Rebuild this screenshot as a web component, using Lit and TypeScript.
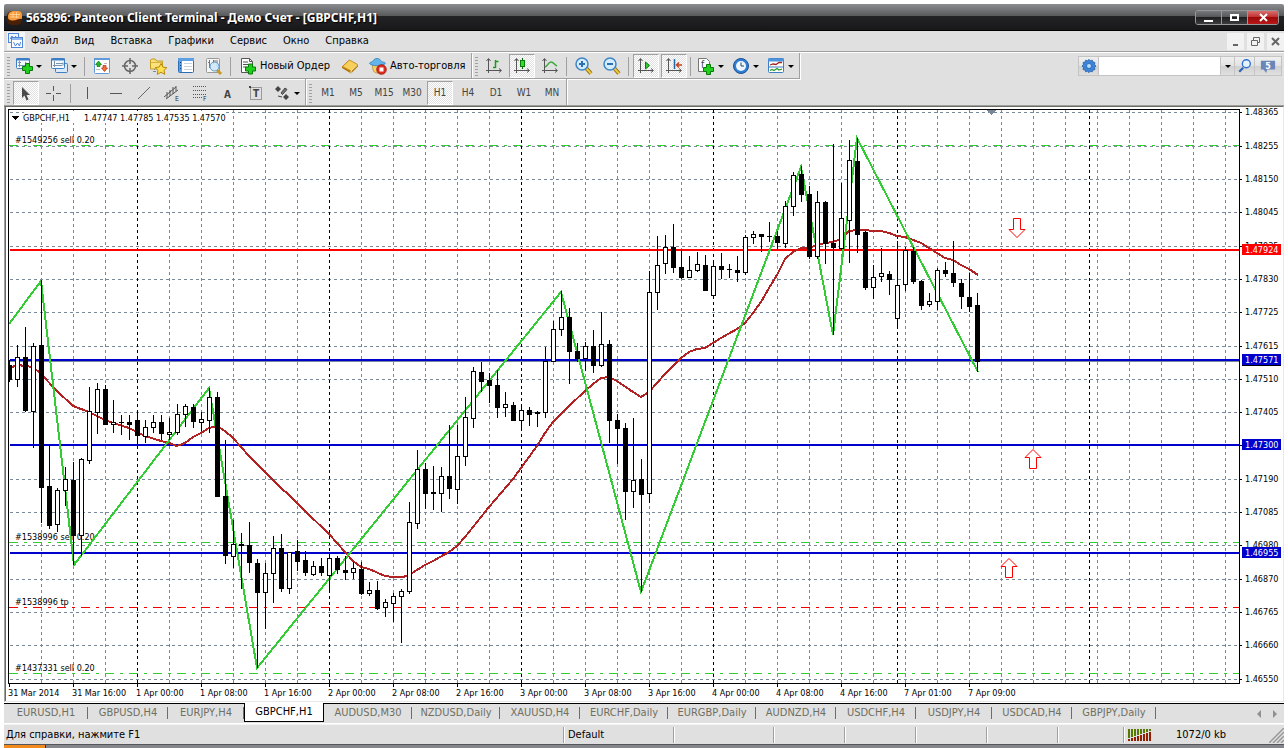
import { LitElement, html, svg, css, nothing } from "lit";
import { customElement, property } from "lit/decorators.js";
import { classMap } from "lit/directives/class-map.js";

type Point = [number, number];
// high, body top, body bottom, low, 1 = rising (hollow) / 0 = falling (filled)
type Candle = [number, number, number, number, 0 | 1];

const CANDLES: Candle[] = [
  [360, 365, 380, 382, 0], [345, 357, 380, 387, 1], [327, 357, 411, 412, 0], [343, 346, 412, 448, 1],
  [280, 345, 488, 523, 0], [445, 486, 526, 529, 0], [488, 490, 525, 532, 1], [467, 479, 491, 506, 1],
  [462, 480, 536, 565, 0], [458, 459, 536, 556, 1], [387, 411, 461, 464, 1], [383, 389, 413, 434, 1],
  [385, 389, 425, 425, 0], [400, 422, 425, 433, 1], [415, 422, 423, 435, 0], [415, 422, 425, 440, 0],
  [413, 420, 436, 444, 0], [420, 427, 437, 443, 1], [415, 422, 428, 433, 1], [415, 422, 434, 440, 0],
  [418, 432, 435, 440, 1], [404, 414, 433, 435, 1], [404, 406, 415, 427, 1], [404, 407, 422, 428, 0],
  [412, 419, 423, 431, 1], [388, 397, 421, 433, 1], [392, 397, 497, 497, 0], [440, 496, 556, 564, 0],
  [520, 544, 557, 568, 1], [533, 544, 546, 589, 0], [522, 545, 563, 573, 0], [559, 563, 593, 668, 0],
  [563, 573, 593, 629, 1], [536, 548, 574, 603, 1], [534, 548, 589, 592, 0], [552, 552, 589, 594, 1],
  [540, 551, 562, 571, 0], [551, 560, 573, 576, 0], [561, 566, 575, 576, 1], [558, 566, 573, 576, 0],
  [555, 558, 576, 592, 1], [556, 558, 570, 574, 0], [556, 570, 573, 580, 0], [562, 568, 573, 579, 1],
  [562, 569, 594, 595, 0], [582, 590, 594, 596, 1], [581, 590, 609, 610, 0], [599, 602, 608, 617, 1],
  [593, 596, 604, 622, 1], [589, 591, 597, 643, 1], [502, 522, 592, 594, 1], [450, 469, 524, 529, 1],
  [463, 469, 494, 509, 0], [466, 492, 494, 510, 0], [467, 476, 494, 512, 1], [425, 476, 489, 499, 0],
  [425, 456, 490, 504, 1], [397, 417, 457, 466, 1], [367, 371, 419, 428, 1], [362, 372, 382, 392, 0],
  [373, 380, 386, 403, 0], [370, 385, 408, 418, 0], [392, 404, 408, 417, 1], [402, 405, 421, 421, 0],
  [407, 410, 421, 430, 1], [407, 410, 415, 426, 0], [411, 412, 414, 427, 0], [347, 361, 413, 418, 1],
  [321, 329, 362, 362, 1], [291, 317, 330, 336, 1], [308, 317, 352, 384, 0], [343, 351, 359, 362, 0],
  [342, 346, 359, 371, 1], [330, 346, 366, 373, 0], [312, 344, 366, 367, 1], [340, 344, 421, 443, 0],
  [414, 420, 429, 464, 0], [423, 428, 492, 520, 0], [418, 480, 492, 508, 1], [459, 479, 495, 592, 0],
  [271, 292, 494, 503, 1], [236, 265, 293, 310, 1], [235, 247, 264, 274, 1], [224, 247, 268, 273, 0],
  [250, 267, 278, 279, 0], [256, 270, 278, 278, 1], [252, 264, 271, 272, 1], [255, 265, 291, 291, 0],
  [262, 266, 296, 296, 1], [253, 266, 270, 279, 0], [264, 269, 270, 278, 0], [256, 270, 273, 282, 0],
  [235, 237, 273, 275, 1], [231, 234, 238, 244, 1], [234, 234, 237, 252, 0], [222, 236, 237, 242, 0],
  [231, 236, 243, 249, 0], [201, 206, 244, 248, 1], [172, 175, 207, 216, 1], [166, 174, 195, 202, 0],
  [186, 194, 257, 259, 0], [191, 202, 257, 259, 1], [201, 202, 244, 264, 0], [144, 243, 248, 335, 0],
  [183, 218, 249, 250, 1], [140, 160, 221, 263, 1], [138, 161, 235, 253, 0], [231, 232, 288, 290, 0],
  [265, 277, 288, 299, 1], [248, 273, 277, 282, 1], [271, 274, 280, 295, 0], [241, 285, 319, 327, 1],
  [247, 250, 285, 291, 1], [247, 251, 282, 284, 0], [280, 281, 306, 310, 0], [293, 301, 305, 307, 1],
  [268, 270, 302, 310, 1], [262, 270, 274, 277, 0], [241, 273, 283, 287, 0], [279, 283, 297, 309, 0],
  [273, 297, 307, 312, 0], [293, 305, 362, 372, 0],
];

const AVERAGE: Point[] = [
  [9, 368], [18, 365], [25, 366], [33, 367], [41, 374], [57, 391], [73, 406], [89, 412], [105, 420], [113, 423],
  [129, 428], [145, 436], [161, 441], [169, 443], [177, 446], [185, 443], [193, 437], [201, 433], [209, 428],
  [217, 426], [225, 431], [233, 438], [249, 456], [273, 480], [281, 488], [289, 495], [305, 511], [329, 534],
  [345, 552], [353, 561], [361, 567], [369, 569], [385, 576], [393, 577], [403, 577], [409, 575], [425, 565],
  [433, 561], [449, 552], [457, 546], [465, 537], [473, 527], [489, 507], [513, 479], [537, 446], [545, 433],
  [553, 422], [569, 406], [585, 391], [593, 384], [601, 378], [609, 377], [617, 381], [633, 392], [641, 397],
  [649, 392], [665, 374], [681, 358], [689, 352], [697, 349], [705, 348], [721, 338], [737, 329], [745, 323],
  [753, 313], [761, 302], [769, 288], [777, 275], [785, 259], [793, 252], [801, 248], [809, 248], [817, 245],
  [825, 243], [833, 242], [841, 239], [849, 231], [857, 230], [881, 231], [889, 233], [897, 236], [905, 237],
  [913, 240], [921, 243], [937, 253], [945, 258], [953, 260], [961, 265], [969, 269], [978, 275],
];

const ZIGZAG: Point[] = [
  [9, 324], [41, 281], [74, 565], [209, 388], [257, 668], [561, 292], [641, 592], [801, 167], [833, 335],
  [857, 138], [978, 372],
];

const PRICES: [number, string][] = [
  [112, "1.48365"], [146, "1.48255"], [179, "1.48150"], [212, "1.48045"], [246, "1.47935"], [279, "1.47830"],
  [312, "1.47725"], [346, "1.47615"], [379, "1.47510"], [412, "1.47405"], [445, ""], [479, "1.47190"],
  [512, "1.47085"], [545, "1.46980"], [579, "1.46870"], [612, "1.46765"], [645, "1.46660"], [679, "1.46550"],
];

const LEVELS = [
  { y: 249, price: "1.47924", color: "#ff0000" },
  { y: 359, price: "1.47571", color: "#0000cd" },
  { y: 444, price: "1.47300", color: "#0000cd" },
  { y: 552, price: "1.46955", color: "#0000cd" },
];

const ORDERS = [
  { y: 145, color: "#32cd32", label: "#1549256 sell 0.20" },
  { y: 542, color: "#32cd32", label: "#1538996 sell 0.20" },
  { y: 607, color: "#ee0000", label: "#1538996 tp" },
  { y: 673, color: "#32cd32", label: "#1437331 sell 0.20" },
];

const DAY_STARTS = [137, 329, 521, 713, 897, 1089];

const TIMES = [
  "31 Mar 2014", "31 Mar 16:00", "1 Apr 00:00", "1 Apr 08:00", "1 Apr 16:00", "2 Apr 00:00", "2 Apr 08:00",
  "2 Apr 16:00", "3 Apr 00:00", "3 Apr 08:00", "3 Apr 16:00", "4 Apr 00:00", "4 Apr 08:00", "4 Apr 16:00",
  "7 Apr 01:00", "7 Apr 09:00",
];

const ORIGIN = "translate(-9 -110)";
const toPoints = (list: Point[]) => list.map((p) => p.join(",")).join(" ");

@customElement("price-chart")
class PriceChart extends LitElement {
  static styles = css`
    :host {
      display: flex;
      flex-direction: column;
      font: 9px/12px "DejaVu Sans Condensed", "DejaVu Sans", sans-serif;
      color: #000;
    }
    .main {
      flex: 1;
      display: flex;
      min-height: 0;
    }
    .plot {
      flex: 1;
      min-width: 0;
      border: 1px solid #000;
      overflow: hidden;
    }
    .axis {
      flex: 0 0 42px;
    }
    svg {
      display: block;
      width: 100%;
      height: 100%;
      shape-rendering: crispEdges;
    }
    .axis svg {
      overflow: visible;
    }
    .curve {
      fill: none;
      stroke-width: 2;
    }
    .arrow {
      fill: #fff;
      stroke: #f00;
      shape-rendering: geometricPrecision;
    }
    .times {
      display: flex;
      height: 17px;
      overflow: hidden;
    }
    .time {
      flex: 0 0 64px;
      white-space: nowrap;
      padding-top: 3px;
      position: relative;
    }
    .time::before {
      content: "";
      position: absolute;
      left: 1px;
      top: 0;
      width: 1px;
      height: 3px;
      background: #000;
    }
  `;

  private grid() {
    const columns = Array.from({ length: 38 }, (_, i) => 41 + 32 * i).filter((x) => !DAY_STARTS.includes(x));
    return svg`
      ${PRICES.map(([y]) => svg`<line x1="10" x2="4000" y1=${y + 0.5} y2=${y + 0.5} stroke="#778899" stroke-dasharray="3 3"/>`)}
      ${columns.map((x) => svg`<line x1=${x + 0.5} x2=${x + 0.5} y1="110" y2="1600" stroke="#778899" stroke-dasharray="3 3"/>`)}
      ${DAY_STARTS.map((x) => svg`<line x1=${x + 0.5} x2=${x + 0.5} y1="110" y2="1600" stroke="#000" stroke-dasharray="3 3"/>`)}
    `;
  }

  private candle([high, top, bottom, low, up]: Candle, i: number) {
    const x = 9 + 8 * i;
    return svg`
      <rect x=${x} y=${high} width="1" height=${low - high}/>
      <rect x=${x - 2} y=${top} width="5" height=${bottom - top}/>
      ${up ? svg`<rect x=${x - 1} y=${top + 1} width="3" height=${bottom - top - 2} fill="#fff"/>` : nothing}
    `;
  }

  private arrow(x: number, y: number, down: boolean) {
    const d = down
      ? "M-3.500 -9.500h7v11h4.500l-8 8l-8 -8h4.500z"
      : "M-3.500 9.500h7v-11h4.500l-8 -8l-8 8h4.500z";
    return svg`<path class="arrow" transform="translate(${x} ${y})" d=${d}/>`;
  }

  render() {
    return html`
      <div class="main">
        <div class="plot">
          <svg role="img" aria-label="GBPCHF,H1">
            <g transform=${ORIGIN}>
              ${this.grid()}
              ${ORDERS.map(
                (o) => svg`
                <line x1="9" x2="4000" y1=${o.y + 0.5} y2=${o.y + 0.5} stroke=${o.color} stroke-dasharray="9 6 3 6"/>
                <text x="15" y=${o.y - 2}>${o.label}</text>`,
              )}
              <rect x="10" y="361" width="4000" height="1" fill="#778899"/>
              ${LEVELS.map((l) => svg`<rect x="10" y=${l.y} width="4000" height="2" fill=${l.color}/>`)}
              <polyline class="curve" stroke="#b22222" points=${toPoints(AVERAGE)} />
              <polyline class="curve" stroke="#32cd32" points=${toPoints(ZIGZAG)} />
              ${CANDLES.map((c, i) => this.candle(c, i))}
              ${this.arrow(1017, 228, true)} ${this.arrow(1033, 459, false)} ${this.arrow(1009, 568, false)}
              <rect x="24" y="111" width="202" height="12" fill="#fff" />
              <path d="M12 116h7l-3.500 4z" />
              <text x="23" y="121">GBPCHF,H1</text>
              <text x="84" y="121">1.47747 1.47785 1.47535 1.47570</text>
              <path d="M987 110h9l-4.500 5z" fill="#778899" />
            </g>
          </svg>
        </div>
        <div class="axis">
          <svg role="img" aria-label="Price">
            <g transform="translate(-1240 -109)">
              ${PRICES.map(
                ([y, label]) => svg`
                <rect x="1240" y=${y} width="2" height="1"/>
                <text x="1245" y=${y + 3}>${label}</text>`,
              )}
              <rect x="1242" y="360" width="39" height="6" />
              ${LEVELS.map(
                (l) => svg`
                <rect x="1242" y=${l.y - 5} width="39" height="11" fill=${l.color}/>
                <text x="1245" y=${l.y + 4} fill="#fff">${l.price}</text>`,
              )}
            </g>
          </svg>
        </div>
      </div>
      <div class="times">${TIMES.map((t) => html`<span class="time">${t}</span>`)}</div>
    `;
  }
}

const axes = svg`<path d="M3.500 2v14M1 13.500h15M1.500 4l2-2.500l2 2.500M14 11.500l2.500 2l-2.500 2" fill="none" stroke="#555"/>`;
const plus = (x: number, y: number) =>
  svg`<path transform="translate(${x} ${y})" d="M3.500 .5h4v3h3v4h-3v3h-4v-3h-3v-4h3z" fill="#1fd01f" stroke="#0a7a0a"/>`;
const lens = svg`
  <path d="M11 11l5 5.500" stroke="#8a6a10" stroke-width="4"/><path d="M11 11l5 5.500" stroke="#f0c840" stroke-width="2"/>
  <circle cx="7" cy="7" r="6" fill="#d4ecfb" stroke="#3f86c6" stroke-width="1.500"/>`;

const ICONS: Record<string, unknown> = {
  newChart: svg`<rect x="1.500" y="1.500" width="13" height="10" rx="1" fill="#f4f9ff" stroke="#3c7fc4"/><path d="M1 2.500h14" stroke="#3c7fc4" stroke-width="2"/>
    <path d="M4.500 4v6M3 5.500h3M3 8.500h9M10.500 5v4" stroke="#7d93aa" fill="none"/>${plus(7, 6)}`,
  profiles: svg`<rect x="5.500" y="6.500" width="12" height="9" rx="1" fill="#d8e9fa" stroke="#3c7fc4"/>
    <rect x="1.500" y="1.500" width="13" height="10" rx="1" fill="#f4f9ff" stroke="#3c7fc4"/><path d="M1 2.500h14" stroke="#3c7fc4" stroke-width="2"/>
    <path d="M4.500 4v6M3 8.500h9M6 6.500h7M13 5.500v3" stroke="#7d93aa" fill="none"/>`,
  market: svg`<rect x="1.500" y="1.500" width="15" height="15" rx="1" fill="#fff" stroke="#5d9bdc"/><path d="M1 2h16" stroke="#5d9bdc" stroke-width="2"/>
    <path d="M4 9.500v-2h-1.500l3-3.500l3 3.500h-1.500v2z" fill="#28b428" stroke="#0a7a0a" stroke-width=".7"/><path d="M10 8.500v2.500h-1.500l3 3.500l3-3.500h-1.500v-2.500z" fill="#f0703c" stroke="#b03010" stroke-width=".7"/>
    <path d="M11 6.500h3M3 12.500h4" stroke="#bbb"/>`,
  cross: svg`<circle cx="9" cy="9" r="5.500" fill="none" stroke="#666" stroke-width="1.500"/><path d="M9 1v6M9 11v6M1 9h6M11 9h6" stroke="#666" stroke-width="1.500"/>`,
  folder: svg`<path d="M1.500 3v9h12v-8h-6l-1.500-2h-3.500z" fill="#fbe27c" stroke="#c39a20"/><path d="M1.500 5.500h12" stroke="#d7b23c"/><path d="M4 14.500h4M5.500 12v4" stroke="#888" stroke-dasharray="1 1"/>
    <path d="M12 6.500l1.900 3.600l4 .5l-2.900 2.700l.8 4l-3.800-2l-3.800 2l.8-4l-2.900-2.700l4-.5z" fill="#ffe14d" stroke="#b88710"/>`,
  panel: svg`<rect x="1.500" y="1.500" width="15" height="14" rx="1" fill="#fff" stroke="#2d6db5"/><path d="M1 2.500h16M3.500 2v13" stroke="#5b9fe4" stroke-width="3"/>
    <path d="M7 6.500h8M7 9.500h8M7 12.500h8" stroke="#c7d2e0"/><path d="M3 5.500h1M3 8.500h1M3 11.500h1" stroke="#103c80"/>`,
  tester: svg`<rect x="1.500" y="1.500" width="13" height="14" rx="1" fill="#f6f6f6" stroke="#999"/><path d="M4.500 3v8M8.500 3v4M12 3v7M3 5.500h2M8 4h3" stroke="#777"/>
    <path d="M12 13l4 4" stroke="#c79a28" stroke-width="3"/><circle cx="9.500" cy="9.500" r="4.500" fill="#cde7fa" stroke="#5f94c4" fill-opacity=".85"/>`,
  order: svg`<path d="M2.500 1.500h8l3 3v11h-11z" fill="#fff" stroke="#555"/><path d="M10.500 1.500v3h3M4 5h5M4 7.500h7M4 10h4" fill="none" stroke="#555"/>${plus(6, 6.5)}`,
  gold: svg`<path d="M1 11l9 5.500l7-7v-2l-9-4.500l-7 6.500z" fill="#b5780c"/><path d="M1.500 9.500l7-6.500l8 4.500l-6.500 6.500z" fill="#f8cf5a" stroke="#c0861a" stroke-width=".8"/><path d="M10 16v-2l6.500-6" stroke="#ffe9a0" fill="none"/>`,
  auto: svg`<path d="M3.500 7h10c0 4 0 9-5 9s-5-5-5-9z" fill="#f6cf6a" stroke="#b88a2a" stroke-width=".8"/><path d="M3 8c-3-1-3-2-1-3c2 .5 2-3.500 6-3.500s4 4 6 3.500c3 .5 3 2 0 3c-3 1-8 1-11 0z" fill="#62b4ea" stroke="#2e7fb8" stroke-width=".8"/>
    <circle cx="12.500" cy="12.500" r="4.800" fill="#dc2d1e" stroke="#96140a" stroke-width=".8"/><rect x="10.500" y="10.500" width="4" height="4" fill="#fff"/>`,
  bars: svg`${axes}<path d="M10.500 3v8M10.500 4.500h3M8 10.500h2.500" stroke="#1a9a1a" stroke-width="1.500" fill="none"/>`,
  candles: svg`${axes}<path d="M9.500 1v11" stroke="#0a6a0a"/><rect x="7.500" y="3.500" width="4" height="6" fill="#2fe02f" stroke="#0a7a0a"/>`,
  line: svg`${axes}<path d="M4 10c3-1 3-5 6-5s3 3 6 4" stroke="#3cab3c" stroke-width="1.500" fill="none"/>`,
  zoomIn: svg`${lens}<path d="M7 4v6M4 7h6" stroke="#2c70b4" stroke-width="2"/>`,
  zoomOut: svg`${lens}<path d="M4 7h6" stroke="#2c70b4" stroke-width="2"/>`,
  scroll: svg`${axes}<path d="M8.500 5v7l4-3.500z" fill="#2fd02f" stroke="#0a7a0a"/>`,
  shift: svg`${axes}<path d="M9.500 2v10" stroke="#1f66a8" stroke-width="1.500"/><path d="M17 8h-5M14 5.500l-2.500 2.500l2.500 2.500" stroke="#c8401a" fill="none" stroke-width="1.500"/>`,
  indicators: svg`<path d="M1.500 1.500h8l3 3v10h-11z" fill="#fff" stroke="#777"/><text x="4" y="11" class="glyph">f</text>${plus(6, 7)}`,
  clock: svg`<circle cx="9" cy="9" r="7.500" fill="#2f7fd6" stroke="#1b4f94"/><circle cx="9" cy="9" r="5" fill="#eef6ff"/><path d="M9 5.500v3.500h3" stroke="#345" fill="none"/>`,
  template: svg`<rect x="1.500" y="1.500" width="15" height="14" rx="1" fill="#fff" stroke="#3c7fc4"/><path d="M1 3h16" stroke="#4c94dd" stroke-width="3"/><path d="M1 10h16" stroke="#3c7fc4"/>
    <path d="M3 8l3-1l3 .5l3-2h3" stroke="#a02818" fill="none" stroke-width="1.300"/><path d="M3 13.500l2-1l2 1l3-2l2 1.500l3-1" stroke="#2a9a2a" fill="none" stroke-width="1.300"/>`,
  pointer: svg`<path d="M5 3v11l2.500-2.500l2 5l2-1l-2-4.500h3.500z" fill="#4a4a4a"/>`,
  crosshair: svg`<path d="M8.500 2v5M8.500 11v6M1 9.500h5M11 9.500h5" stroke="#555" shape-rendering="crispEdges"/>`,
  vline: svg`<path d="M8.500 3v12" stroke="#555"/>`,
  hline: svg`<path d="M3 9.500h12" stroke="#555"/>`,
  trend: svg`<path d="M3 15l12-12" stroke="#666"/>`,
  channel: svg`<path d="M1 13l12-10M3 15l12-9M4 8v6M7 6v6M10 3v7M13 2v5" stroke="#555" fill="none"/><text x="12" y="17" class="tiny">E</text>`,
  fibo: svg`<path d="M2 2.500h14M2 6.500h14M2 10.500h14M2 13.500h9" stroke="#555" stroke-dasharray="1 1"/><text x="12" y="17" class="tiny">F</text>`,
  text: svg`<text x="5" y="14" class="glyph bold">A</text>`,
  label: svg`<rect x="3.500" y="3.500" width="11" height="12" fill="none" stroke="#555" stroke-dasharray="1 1"/><rect x="2" y="2" width="2" height="2" fill="#444"/><text x="6" y="13" class="glyph bold">T</text>`,
  shapes: svg`<path d="M5 2l3 3l-3 3l-3-3zM4 8.500l3 1.500M13 10l3 3l-3 3l-3-3z" fill="#444"/><path d="M5 12l4 1M12 4l-4 5l1.500 1.500l4.500-5z" fill="#777" stroke="#444"/>`,
  gear: svg`<g fill="#3d84d8" stroke="#1b5aa8" stroke-width=".8"><path d="M9 1.500l1.500 1.500l2.200-.6l.8 2.100l2.200 .6l-.4 2.200l1.600 1.700l-1.600 1.700l.4 2.200l-2.200 .6l-.8 2.100l-2.200-.6l-1.500 1.500l-1.500-1.500l-2.200 .6l-.8-2.100l-2.200-.6l.4-2.200l-1.600-1.700l1.600-1.700l-.4-2.200l2.200-.6l.8-2.100l2.200 .6z"/><circle cx="9" cy="9" r="2.800" fill="#b9dcfb"/></g>`,
  search: svg`<path d="M7 11l-4.500 4.500" stroke="#2f62b4" stroke-width="2.500"/><circle cx="10.500" cy="6.500" r="4.500" fill="#e6f2ff" stroke="#2f6fd0" stroke-width="1.500"/>`,
  chat: svg`<path d="M1 3h16v10h-9l-1 4l-3-4h-3z" fill="#6b86b8"/><text x="6" y="12" class="glyph bold light">5</text>`,
  app: svg`<rect x="1" y="2" width="15" height="14" rx="5" fill="#4a1f08"/><path d="M2 8c0-4 2-6 6-6h4c3 0 4 2 4 4v4c-3-1-7 3-12 1c-1.500-.5-2-1.500-2-3z" fill="#f79a3c"/><path d="M4 5.500h10M4 8h9M7 3v6M10.500 3v6" stroke="#ffd9a0" stroke-width=".8"/>`,
  doc: svg`<path d="M0 0h18v18h-18z" fill="#f4f4f4"/><rect x="1.500" y="1.500" width="10" height="9" fill="#eef5ff" stroke="#4f86d8"/><path d="M3 7l2-3l2 3l2-3" fill="none" stroke="#4f86d8"/><rect x="4.500" y="5.500" width="11" height="10" fill="#fff" stroke="#4f86d8"/><path d="M5 7h10" stroke="#8fb6ee" stroke-width="2"/><path d="M6.500 10l2 4l2-3l2 3l1-4" fill="none" stroke="#4f86d8"/>`,
};

const icon = (name: string) => html`<svg class="icon" viewBox="0 0 18 18" aria-hidden="true">${ICONS[name]}</svg>`;

const MENU = ["Файл", "Вид", "Вставка", "Графики", "Сервис", "Окно", "Справка"];
const PERIODS = ["M1", "M5", "M15", "M30", "H1", "H4", "D1", "W1", "MN"];
const TABS: [string, string][] = [
  ["EURUSD,H1", "w84"], ["GBPUSD,H4", "w80"], ["EURJPY,H4", "w76"], ["GBPCHF,H1", "w80"], ["AUDUSD,M30", "w88"],
  ["NZDUSD,Daily", "w88"], ["XAUUSD,H4", "w80"], ["EURCHF,Daily", "w88"], ["EURGBP,Daily", "w88"],
  ["AUDNZD,H4", "w80"], ["USDCHF,H4", "w80"], ["USDJPY,H4", "w76"], ["USDCAD,H4", "w80"], ["GBPJPY,Daily", "w84"],
];

@customElement("app-root")
class AppRoot extends LitElement {
  @property() period = "H1";
  @property() symbol = "GBPCHF,H1";

  static styles = css`
    :host {
      display: flex;
      flex-direction: column;
      box-sizing: border-box;
      min-height: 100vh;
      padding: 4px 4px 0;
      background: #fff;
      color: #000;
      font: 11px/14px "DejaVu Sans Condensed", "DejaVu Sans", sans-serif;
      overflow: hidden;
    }
    button {
      font: inherit;
      color: inherit;
      border: 0;
      padding: 0;
      margin: 0;
      background: none;
      white-space: nowrap;
    }
    .icon {
      display: block;
      flex: none;
      width: 18px;
      height: 18px;
      overflow: visible;
    }
    .glyph {
      font: 10px "DejaVu Sans Condensed", sans-serif;
      fill: #444;
    }
    .tiny {
      font: 7px "DejaVu Sans Condensed", sans-serif;
      fill: #333;
    }
    .bold {
      font-weight: bold;
    }
    .light {
      fill: #fff;
    }

    .title {
      display: flex;
      align-items: center;
      height: 27px;
      box-sizing: border-box;
      padding: 0 5px 0 2px;
      gap: 2px;
      background: linear-gradient(#8c8d90 0, #58595b 12px, #232325 12px, #18181a 26px, #000 26px);
      border-radius: 2px 2px 0 0;
    }
    .caption {
      flex: 1;
      margin: 0;
      font: bold 12px/16px "Noto Sans", "Open Sans", sans-serif;
      color: #fff;
      text-shadow: 1px 1px 1px #000;
      white-space: nowrap;
    }
    .window {
      display: flex;
      border: 1px solid #999;
      border-radius: 3px;
      overflow: hidden;
    }
    .window button {
      width: 26px;
      height: 13px;
      border-right: 1px solid #999;
      background: linear-gradient(#77787a 0, #55565a 6px, #1c1c1e 6px, #3c3c3e);
    }
    .window button:last-child {
      width: 30px;
      border-right: 0;
      background: linear-gradient(#d87070 0, #c03030 6px, #9c0808 6px, #b81818);
    }
    .window svg,
    .child svg {
      display: block;
      margin: auto;
    }

    .menu {
      display: flex;
      align-items: center;
      height: 21px;
      box-sizing: border-box;
      padding: 0 0 0 3px;
      background: #e0e0e0;
      border-bottom: 1px solid #a0a0a0;
    }
    .items {
      flex: 1;
      display: flex;
      gap: 16px;
      padding-left: 6px;
    }
    .child {
      display: flex;
      gap: 3px;
    }
    .child button {
      width: 17px;
      height: 17px;
      background: #f2f2f2;
    }

    .bars {
      background: #e0e0e0;
      border-top: 1px solid #fff;
      border-bottom: 1px solid #a0a0a0;
    }
    .row {
      display: flex;
      align-items: stretch;
      height: 26px;
    }
    .band {
      display: flex;
      align-items: center;
      box-sizing: border-box;
      padding-top: 1px;
      border-right: 1px solid #a0a0a0;
      border-bottom: 1px solid #a0a0a0;
      box-shadow: 1px 1px #fff;
    }
    .row:last-child .band {
      border-bottom: 0;
      padding-top: 2px;
      box-shadow: 1px 0 #fff;
    }
    .grip {
      width: 3px;
      height: 19px;
      margin: 0 2px 0 3px;
      background: repeating-linear-gradient(#a0a0a0 0 1px, transparent 1px 3px);
    }
    .tool {
      display: flex;
      align-items: center;
      justify-content: center;
      box-sizing: border-box;
      width: 26px;
      height: 24px;
      margin: 0 1px;
    }
    .drop {
      width: 33px;
      gap: 3px;
      justify-content: flex-start;
      padding-left: 2px;
    }
    .drop::after {
      content: "";
      border: 3px solid transparent;
      border-top-color: #000;
      border-bottom: 0;
    }
    .wide {
      width: auto;
      gap: 3px;
      padding: 0 5px 0 4px;
    }
    .on {
      border: 1px solid #a0a0a0;
      border-right-color: #fff;
      border-bottom-color: #fff;
      background: repeating-conic-gradient(#fff 0 25%, #e0e0e0 0 50%) 0 0 / 2px 2px;
    }
    .period {
      color: #444;
      font-size: 10px;
    }
    .sep {
      width: 1px;
      height: 19px;
      margin: 0 3px 0 2px;
      background: #a0a0a0;
    }
    .spacer {
      flex: 1;
    }
    .finder {
      display: flex;
      align-self: center;
      height: 20px;
      margin: 0 2px 0 0;
      border: 1px solid #c4c4c4;
      box-sizing: border-box;
      background: #c4c4c4;
      gap: 1px;
    }
    .finder button {
      display: flex;
      align-items: center;
      justify-content: center;
      width: 19px;
      background: linear-gradient(#f0f0f0, #e2e2e2 9px, #d0d0d0 9px, #e0e0e0);
    }
    .finder .icon {
      width: 16px;
      height: 16px;
    }
    .finder .more {
      width: 13px;
    }
    .finder .more::after {
      content: "";
      border: 3px solid transparent;
      border-top-color: #000;
      border-bottom: 0;
    }
    .finder .chat {
      width: 26px;
    }
    .finder input {
      width: 121px;
      box-sizing: border-box;
      padding: 0 3px;
      border: 0;
      outline: 0;
      font: inherit;
      background: #fff;
    }

    .chart {
      flex: 1;
      display: flex;
      flex-direction: column;
      min-height: 0;
      padding: 2px 1px 0 2px;
      border-top: 1px solid #6b6b5f;
      border-left: 1px solid #a0a0a0;
      border-right: 1px solid #e8e8e8;
      border-bottom: 1px solid #e8e8e8;
      box-shadow: inset 1px 0 #6b6b5f;
    }
    price-chart {
      flex: 1;
      min-height: 0;
      padding-left: 1px;
    }

    .tabs {
      display: flex;
      height: 20px;
      margin-top: 1px;
      background: #e0e0e0;
      color: #6f6f60;
      border-bottom: 1px solid #fff;
      overflow: hidden;
    }
    .tabs > * {
      border-top: 1px solid #000;
    }
    .tab {
      box-sizing: border-box;
      flex: none;
      padding-bottom: 1px;
      height: 19px;
      background: linear-gradient(#6f6f60, #6f6f60) 100% 3px / 1px 12px no-repeat;
    }
    .w76 {
      width: 76px;
    }
    .w80 {
      width: 80px;
    }
    .w84 {
      width: 84px;
    }
    .w88 {
      width: 88px;
    }
    .current {
      color: #000;
      background: #fff;
      border: 1px solid #000;
      border-top: 0;
    }
    .rest {
      flex: 1;
      display: flex;
      justify-content: flex-end;
      align-items: center;
      gap: 12px;
      padding-right: 7px;
    }
    .rest button {
      border: 4px solid transparent;
    }
    .rest .left {
      border-right-color: #909090;
      border-left: 0;
    }
    .rest .right {
      border-left-color: #909090;
      border-right: 0;
    }

    .status {
      display: flex;
      align-items: center;
      box-sizing: border-box;
      height: 20px;
      padding-top: 1px;
      background: #e0e0e0;
      border-top: 1px solid #f4f4f4;
    }
    .cell {
      flex: none;
      box-sizing: border-box;
      display: flex;
      align-items: center;
      height: 16px;
      padding-left: 4px;
      border-left: 1px solid #a0a0a0;
      box-shadow: inset 1px 0 #fff;
    }
    .hint {
      flex: 1;
      padding-left: 2px;
    }
    .preset {
      width: 110px;
    }
    .c100 {
      width: 100px;
    }
    .c71 {
      width: 71px;
    }
    .c66 {
      width: 66px;
    }
    .traffic {
      width: 161px;
      gap: 24px;
      padding-right: 0;
    }
    .size-grip {
      align-self: flex-end;
      margin-left: auto;
    }
    .frame {
      height: 4px;
      background: linear-gradient(90deg, #f28a1e 41px, #333 41px 42px, #85868c 42px);
      border-top: 1px solid #55565a;
      box-sizing: border-box;
    }
  `;

  private tool(name: string, label: string, kind = "") {
    const classes = { tool: true, on: kind === "on", drop: kind === "drop" };
    return html`<button class=${classMap(classes)} aria-label=${label}>${icon(name)}</button>`;
  }

  private renderTitle() {
    return html`
      <header class="title">
        ${icon("app")}
        <h1 class="caption">565896: Panteon Client Terminal - Демо Счет - [GBPCHF,H1]</h1>
        <div class="window">
          <button aria-label="Minimize"><svg width="10" height="9"><path d="M0 7h9v2h-9z" fill="#fff" /></svg></button>
          <button aria-label="Maximize"><svg width="10" height="9"><path d="M1 2h7v5h-7z" fill="none" stroke="#fff" stroke-width="2" /></svg></button>
          <button aria-label="Close"><svg width="9" height="9"><path d="M1 1l7 7M8 1l-7 7" stroke="#fff" stroke-width="2" /></svg></button>
        </div>
      </header>
    `;
  }

  private renderMenu() {
    return html`
      <nav class="menu">
        ${icon("doc")}
        <div class="items">${MENU.map((m) => html`<button>${m}</button>`)}</div>
        <div class="child">
          <button aria-label="Minimize chart"><svg width="9" height="9"><path d="M2 7h5v2h-5z" fill="#666" /></svg></button>
          <button aria-label="Restore chart"><svg width="9" height="9"><path d="M2.500 3v-2.500h6v5h-2M.5 3.500h6v5h-6z" fill="none" stroke="#666" /></svg></button>
          <button aria-label="Close chart"><svg width="9" height="9"><path d="M1 1l7 7M8 1l-7 7" stroke="#666" stroke-width="2" /></svg></button>
        </div>
      </nav>
    `;
  }

  private renderBars() {
    return html`
      <div class="bars">
        <div class="row">
          <div class="band">
            <i class="grip"></i>
            ${this.tool("newChart", "New chart", "drop")} ${this.tool("profiles", "Profiles", "drop")}
            <i class="sep"></i>
            ${this.tool("market", "Market watch")} ${this.tool("cross", "Data window")}
            ${this.tool("folder", "Navigator")} ${this.tool("panel", "Terminal")} ${this.tool("tester", "Tester")}
            <i class="sep"></i>
            <button class="tool wide">${icon("order")}Новый Ордер</button>
            ${this.tool("gold", "Editor")}
            <button class="tool wide">${icon("auto")}Авто-торговля</button>
          </div>
          <div class="band">
            <i class="grip"></i>
            ${this.tool("bars", "Bars")} ${this.tool("candles", "Candles", "on")} ${this.tool("line", "Line")}
            <i class="sep"></i>
            ${this.tool("zoomIn", "Zoom in")} ${this.tool("zoomOut", "Zoom out")}
            <i class="sep"></i>
            ${this.tool("scroll", "Auto scroll", "on")} ${this.tool("shift", "Chart shift", "on")}
            <i class="sep"></i>
            ${this.tool("indicators", "Indicators", "drop")} ${this.tool("clock", "Periods", "drop")}
            ${this.tool("template", "Templates", "drop")}
          </div>
          <div class="spacer"></div>
          <div class="finder">
            <button aria-label="Settings">${icon("gear")}</button>
            <input type="text" aria-label="Search" />
            <button class="more" aria-label="History"></button>
            <button aria-label="Find">${icon("search")}</button>
            <button class="chat" aria-label="Messages">${icon("chat")}</button>
          </div>
        </div>
        <div class="row">
          <div class="band">
            <i class="grip"></i>
            ${this.tool("pointer", "Cursor", "on")} ${this.tool("crosshair", "Crosshair")}
            <i class="sep"></i>
            ${this.tool("vline", "Vertical line")} ${this.tool("hline", "Horizontal line")}
            ${this.tool("trend", "Trend line")} ${this.tool("channel", "Channel")} ${this.tool("fibo", "Fibonacci")}
            ${this.tool("text", "Text")} ${this.tool("label", "Label")} ${this.tool("shapes", "Arrows", "drop")}
          </div>
          <div class="band">
            <i class="grip"></i>
            ${PERIODS.map(
              (p) => html`<button
                class=${classMap({ tool: true, period: true, on: p === this.period })}
                @click=${() => (this.period = p)}
              >${p}</button>`,
            )}
          </div>
        </div>
      </div>
    `;
  }

  private renderTabs() {
    return html`
      <div class="tabs">
        ${TABS.map(
          ([name, width]) => html`<button
            class=${classMap({ tab: true, [width]: true, current: name === this.symbol })}
            @click=${() => (this.symbol = name)}
          >${name}</button>`,
        )}
        <div class="rest">
          <button class="left" aria-label="Previous tabs"></button>
          <button class="right" aria-label="Next tabs"></button>
        </div>
      </div>
    `;
  }

  private renderStatus() {
    const heights = [2, 3, 4, 5, 6, 7, 8, 9];
    return html`
      <footer class="status">
        <span class="hint">Для справки, нажмите F1</span>
        <span class="cell preset">Default</span>
        <span class="cell c100"></span><span class="cell c71"></span><span class="cell c71"></span>
        <span class="cell c71"></span><span class="cell c71"></span><span class="cell c66"></span>
        <span class="cell traffic">
          <svg width="24" height="12" aria-hidden="true">
            ${heights.map(
              (h, i) => svg`<rect x=${i * 3} y="0" width="2" height=${11 - h} fill="#567a00"/>
              <rect x=${i * 3} y=${12 - h} width="2" height=${h} fill="#961e00"/>`,
            )}
          </svg>
          1072/0 kb
          <svg class="size-grip" width="15" height="15" aria-hidden="true">
            <path d="M0 15L15 0M4 15L15 4M8 15L15 8M12 15L15 12" stroke="#999" stroke-width="1.500" />
          </svg>
        </span>
      </footer>
      <div class="frame"></div>
    `;
  }

  render() {
    return html`
      ${this.renderTitle()} ${this.renderMenu()} ${this.renderBars()}
      <main class="chart"><price-chart></price-chart></main>
      ${this.renderTabs()} ${this.renderStatus()}
    `;
  }
}
